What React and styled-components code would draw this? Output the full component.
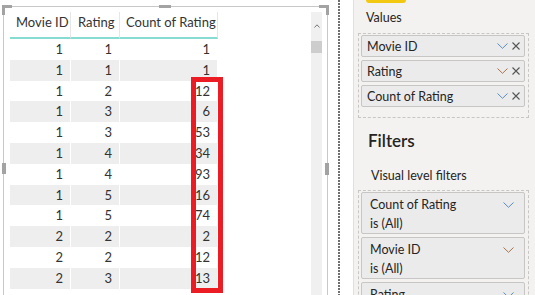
import React from 'react';
import styled, { createGlobalStyle } from 'styled-components';

const GlobalStyle = createGlobalStyle`
  html, body {
    margin: 0;
    padding: 0;
    background: #fff;
    overflow: hidden;
  }
  body {
    font-family: Lato, "Open Sans", sans-serif;
    color: #333;
  }
`;

const Page = styled.div`
  display: flex;
  width: 535px;
  height: 295px;
  overflow: hidden;
  background: #fff;
`;

const Canvas = styled.div`
  position: relative;
  width: 338px;
  flex-shrink: 0;
`;

const Frame = styled.div`
  display: flex;
  box-sizing: border-box;
  width: 325px;
  height: 320px;
  margin: 6px 0 0 3px;
  padding: 5px 5px 0 6px;
  border: 1px solid #c8c8c8;
  border-bottom: none;
  position: relative;
`;

const Handle = styled.div`
  position: absolute;
  background: #a3a3a3;
  left: ${(p) => p.x}px;
  top: ${(p) => p.y}px;
  width: ${(p) => p.w}px;
  height: ${(p) => p.h}px;
`;

const Grid = styled.div`
  display: grid;
  grid-template-columns: 61px 49px 98px;
  align-content: start;
  font-size: 13px;
`;

const HeadCell = styled.div`
  box-sizing: border-box;
  height: 27px;
  padding: 2px 0 0 ${(p) => p.pl}px;
  line-height: 16px;
  color: #333;
  border-right: 1px solid #e6e6e6;
  border-bottom: 2px solid #86dcd1;
  white-space: nowrap;
`;

const Cell = styled.div`
  box-sizing: border-box;
  height: 20.8px;
  line-height: 20.8px;
  padding-right: 7px;
  text-align: right;
  color: #333;
  background: ${(p) => (p.alt ? '#eeeeee' : '#fff')};
  border-right: 1px solid #fff;
`;

const Marker = styled.div`
  position: absolute;
  left: 187px;
  top: 70px;
  width: 32px;
  height: 216px;
  box-sizing: border-box;
  border: 5px solid #ec1c24;
`;

const Track = styled.div`
  margin-left: auto;
  width: 11px;
  background: #f0f0f0;
  display: flex;
  flex-direction: column;
  align-items: center;
`;

const UpArrow = styled.svg`
  margin-top: 12px;
`;

const Thumb = styled.div`
  margin-top: 13px;
  width: 11px;
  height: 12px;
  background: #cdcdcd;
`;

const Dotted = styled.div`
  width: 2px;
  flex-shrink: 0;
  background: repeating-linear-gradient(to bottom, #6f6f6f 0 2px, transparent 2px 3px);
`;

const Panel = styled.div`
  margin-left: 13px;
  flex: 1;
  background: #f3f2f1;
  border-left: 1px solid #e1dfdd;
  display: flex;
  flex-direction: column;
`;

const Tab = styled.div`
  flex-shrink: 0;
  margin-left: 12px;
  width: 40px;
  height: 3px;
  background: #f2c811;
  border-radius: 0 0 3px 3px;
`;

const Label = styled.div`
  margin: ${(p) => p.mt}px 0 0 ${(p) => p.ml}px;
  font-size: 12.5px;
  line-height: 16px;
  color: #252423;
`;

const Heading = styled.div`
  margin: 12px 0 0 14px;
  font-size: 17px;
  line-height: 22px;
  font-weight: 600;
  color: #252423;
`;

const Well = styled.div`
  box-sizing: border-box;
  width: 171px;
  margin: ${(p) => p.mt}px 0 0 4px;
  padding: 1px 3px 10px 2px;
  border: 1px dashed #c8c6c4;
  display: flex;
  flex-direction: column;
  gap: 3px;
`;

const Field = styled.div`
  box-sizing: border-box;
  height: 22px;
  display: flex;
  align-items: center;
  gap: 4px;
  padding: 0 4px 0 5px;
  background: #ebebeb;
  border: 1px solid #c8c6c4;
  border-radius: 2px;
  font-size: 12.5px;
  color: #252423;
`;

const FieldName = styled.span`
  flex: 1;
`;

const Card = styled.div`
  box-sizing: border-box;
  height: 42px;
  padding: 2px 10px 0 8px;
  background: #ebebeb;
  border: 1px solid #c8c6c4;
  border-radius: 2px;
  font-size: 12.5px;
  line-height: 19px;
  color: #252423;
`;

const CardTop = styled.div`
  display: flex;
  align-items: center;
  justify-content: space-between;
`;

const Chevron = ({ color }) => (
  <svg width="11" height="6" viewBox="0 0 11 6">
    <polyline points="0.5,0.5 5.5,5.3 10.5,0.5" fill="none" stroke={color} strokeWidth="1" />
  </svg>
);

const Close = () => (
  <svg width="8" height="8" viewBox="0 0 8 8">
    <path d="M0.5 0.5 L7.5 7.5 M7.5 0.5 L0.5 7.5" stroke="#555" strokeWidth="1.1" />
  </svg>
);

const BLUE = '#5b8ccb';
const BROWN = '#a8724c';

const rows = [
  [1, 1, 1], [1, 1, 1], [1, 2, 12], [1, 3, 6], [1, 3, 53], [1, 4, 34],
  [1, 4, 93], [1, 5, 16], [1, 5, 74], [2, 2, 2], [2, 2, 12], [2, 3, 13],
];

const fields = [
  { name: 'Movie ID', color: BLUE },
  { name: 'Rating', color: BROWN },
  { name: 'Count of Rating', color: BLUE },
];

const filters = [
  { name: 'Count of Rating', color: BLUE },
  { name: 'Movie ID', color: BROWN },
  { name: 'Rating', color: BLUE },
];

export default function App() {
  return (
    <>
      <GlobalStyle />
      <Page>
        <Canvas>
          <Frame>
            <Grid>
              <HeadCell pl={6}>Movie ID</HeadCell>
              <HeadCell pl={7}>Rating</HeadCell>
              <HeadCell pl={6}>Count of Rating</HeadCell>
              {rows.map((r, i) =>
                r.map((v, j) => (
                  <Cell key={`${i}-${j}`} alt={i % 2 === 1}>
                    {v}
                  </Cell>
                ))
              )}
            </Grid>
            <Track>
              <UpArrow width="6" height="4" viewBox="0 0 6 4">
                <polyline points="0.5,3.5 3,0.8 5.5,3.5" fill="none" stroke="#777" strokeWidth="1" />
              </UpArrow>
              <Thumb />
            </Track>
            <Marker />
          </Frame>
          <Handle x={2} y={5} w={10} h={3} />
          <Handle x={2} y={5} w={3} h={10} />
          <Handle x={159} y={5} w={12} h={3} />
          <Handle x={319} y={5} w={10} h={3} />
          <Handle x={326} y={5} w={3} h={10} />
          <Handle x={2} y={163} w={4} h={11} />
          <Handle x={325} y={163} w={4} h={12} />
        </Canvas>
        <Dotted />
        <Panel>
          <Tab />
          <Label mt={7} ml={12}>Values</Label>
          <Well mt={7}>
            {fields.map((f) => (
              <Field key={f.name}>
                <FieldName>{f.name}</FieldName>
                <Chevron color={f.color} />
                <Close />
              </Field>
            ))}
          </Well>
          <Heading>Filters</Heading>
          <Label mt={16} ml={17}>Visual level filters</Label>
          <Well mt={6}>
            {filters.map((f) => (
              <Card key={f.name}>
                <CardTop>
                  <span>{f.name}</span>
                  <Chevron color={f.color} />
                </CardTop>
                <div>is (All)</div>
              </Card>
            ))}
          </Well>
        </Panel>
      </Page>
    </>
  );
}
